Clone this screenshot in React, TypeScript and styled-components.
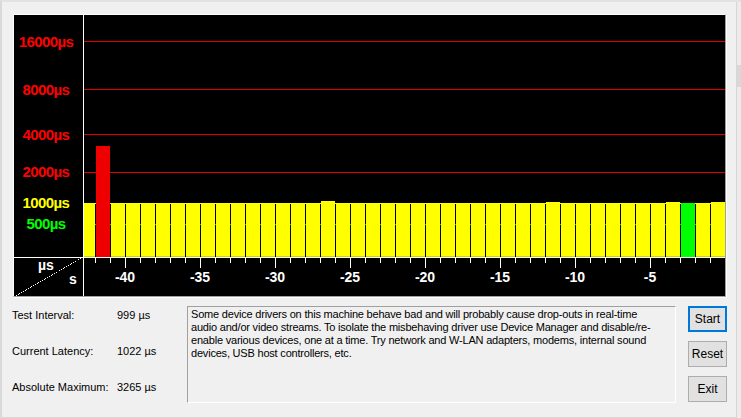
import styled, { createGlobalStyle } from "styled-components";

const GlobalStyle = createGlobalStyle`
  html, body {
    margin: 0;
    padding: 0;
    background: #f0f0f0;
  }
  body {
    font-family: "Liberation Sans", Arial, sans-serif;
    font-size: 11px;
    color: #000;
  }
  * {
    box-sizing: border-box;
  }
`;

const RIGHT = 725;
const SLOT = 15;
const BASE_TOP = 203;
const AXIS_Y = 257;
const AXIS_X = 83;

// bars that differ from the normal 1000µs level, keyed by slot index (k from right)
const SPECIAL: Record<number, { top: number; color?: string }> = {
  42: { top: 146, color: "#ee0000" },
  27: { top: 201 },
  12: { top: 202 },
  4: { top: 202 },
  3: { top: 203, color: "#00ff00" },
  1: { top: 202 },
};

const GRID = [
  { y: 41, label: "16000µs", base: 47, color: "#ff0000", line: "#e00000" },
  { y: 89, label: "8000µs", base: 95, color: "#ff0000", line: "#e00000" },
  { y: 134, label: "4000µs", base: 140, color: "#ff0000", line: "#e00000" },
  { y: 172, label: "2000µs", base: 177, color: "#ff0000", line: "#e00000" },
  { y: 203, label: "1000µs", base: 208, color: "#ffff00", line: "#ffff00" },
  { y: 224, label: "500µs", base: 229, color: "#00ff00", line: "#00e000" },
];

const STATS = [
  { label: "Test Interval:", value: "999 µs" },
  { label: "Current Latency:", value: "1022 µs" },
  { label: "Absolute Maximum:", value: "3265 µs" },
];

export default function App() {
  const slots = Array.from({ length: 42 }, (_, i) => 42 - i);

  return (
    <>
      <GlobalStyle />
      <Window>
        <Main>
          <PlotFrame>
            <Chart viewBox="14 15 711 281" width={711} height={281}>
              <rect x={14} y={15} width={711} height={281} fill="#000" />
              {GRID.map((g) => (
                <rect key={g.label} x={AXIS_X} y={g.y} width={RIGHT - AXIS_X} height={1} fill={g.line} />
              ))}
              <rect x={84} y={BASE_TOP} width={11} height={AXIS_Y - BASE_TOP} fill="#ffff00" />
              <rect x={84} y={AXIS_Y - 1} width={11} height={1} fill="#d0d000" />
              {slots.map((k) => {
                const left = RIGHT - SLOT * k + 1;
                const s = SPECIAL[k];
                const top = s ? s.top : BASE_TOP;
                const color = s?.color ?? "#ffff00";
                return (
                  <g key={k}>
                    <rect x={left} y={top} width={14} height={AXIS_Y - top} fill={color} />
                    {color === "#ffff00" && (
                      <rect x={left} y={AXIS_Y - 1} width={14} height={1} fill="#d0d000" />
                    )}
                  </g>
                );
              })}
              <rect x={AXIS_X} y={15} width={1} height={281} fill="#fff" />
              <rect x={14} y={AXIS_Y} width={711} height={1} fill="#fff" />
              {slots.map((k) => {
                const x = RIGHT - SLOT * k;
                const long = k % 5 === 0;
                return <rect key={`t${k}`} x={x} y={AXIS_Y + 1} width={1} height={long ? 10 : 5} fill="#fff" />;
              })}
              {GRID.map((g) => (
                <AxisLabel key={`l${g.label}`} x={46} y={g.base} fill={g.color}>
                  {g.label}
                </AxisLabel>
              ))}
              {[40, 35, 30, 25, 20, 15, 10, 5].map((n) => (
                <TimeLabel key={n} x={RIGHT - SLOT * n} y={282}>
                  -{n}
                </TimeLabel>
              ))}
              <line x1={16} y1={296} x2={82} y2={258} stroke="#fff" strokeWidth={1} strokeDasharray="1 1" />
              <CornerLabel x={38} y={270}>µs</CornerLabel>
              <CornerLabel x={69} y={284}>s</CornerLabel>
            </Chart>
          </PlotFrame>

          <LowerRow>
            <Stats>
              {STATS.map((s) => (
                <StatRow key={s.label}>
                  <span>{s.label}</span>
                  <span>{s.value}</span>
                </StatRow>
              ))}
            </Stats>
            <MessageBox>
              Some device drivers on this machine behave bad and will probably cause drop-outs in real-time
              <br />
              audio and/or video streams. To isolate the misbehaving driver use Device Manager and disable/re-
              <br />
              enable various devices, one at a time. Try network and W-LAN adapters, modems, internal sound
              <br />
              devices, USB host controllers, etc.
            </MessageBox>
            <Buttons>
              <Button $focused>Start</Button>
              <Button>Reset</Button>
              <Button>Exit</Button>
            </Buttons>
          </LowerRow>

          <StatusBar>
            <StatusPane $width={565} />
            <StatusPane $width={152} />
            <StatusPane />
          </StatusBar>
        </Main>
        <RightEdge>
          <EdgeMark />
        </RightEdge>
      </Window>
    </>
  );
}

const Window = styled.div`
  width: 741px;
  height: 418px;
  display: flex;
  background: #f0f0f0;
  border-left: 2px solid #d9d9d9;
  border-top: 2px solid #e2e2e2;
  overflow: hidden;
`;

const Main = styled.div`
  width: 734px;
  display: flex;
  flex-direction: column;
`;

const RightEdge = styled.div`
  flex: 1;
  border-left: 1px solid #d6d6d6;
  background: #ececec;
`;

const EdgeMark = styled.div`
  margin-top: 63px;
  height: 22px;
  background: #d8d8d8;
`;

const PlotFrame = styled.div`
  margin: 12px 0 0 11px;
  width: 713px;
  height: 283px;
  border: 1px solid;
  border-color: #ffffff #a0a0a0 #a0a0a0 #ffffff;
  box-shadow: 1px 1px 0 #ffffff;
`;

const Chart = styled.svg`
  display: block;
  shape-rendering: crispEdges;
`;

const AxisLabel = styled.text`
  font-family: "Liberation Sans", Arial, sans-serif;
  font-weight: bold;
  font-size: 15px;
  letter-spacing: -0.6px;
  text-anchor: middle;
`;

const TimeLabel = styled.text`
  font-family: "Liberation Sans", Arial, sans-serif;
  font-weight: bold;
  font-size: 14px;
  fill: #fff;
  text-anchor: middle;
`;

const CornerLabel = styled.text`
  font-family: "Liberation Sans", Arial, sans-serif;
  font-weight: bold;
  font-size: 14px;
  fill: #fff;
`;

const LowerRow = styled.div`
  display: flex;
  align-items: flex-start;
  margin-top: 9px;
`;

const Stats = styled.div`
  width: 185px;
  padding: 3px 0 0 10px;
  display: flex;
  flex-direction: column;
`;

const StatRow = styled.div`
  display: grid;
  grid-template-columns: 105px auto;
  height: 36px;
  line-height: 13px;
  white-space: nowrap;
`;

const MessageBox = styled.div`
  width: 489px;
  height: 97px;
  border: 1px solid;
  border-color: #a0a0a0 #ffffff #ffffff #a0a0a0;
  padding: 1px 3px;
  line-height: 13px;
  letter-spacing: -0.2px;
  white-space: nowrap;
  overflow: hidden;
`;

const Buttons = styled.div`
  margin-left: 12px;
  display: flex;
  flex-direction: column;
  gap: 9px;
`;

const Button = styled.button<{ $focused?: boolean }>`
  width: 39px;
  height: 26px;
  padding: 0;
  font-family: "Liberation Sans", Arial, sans-serif;
  font-size: 12px;
  color: #000;
  background: #e1e1e1;
  border: ${(p) => (p.$focused ? "2px solid #0078d7" : "1px solid #adadad")};
  outline: none;
`;

const StatusBar = styled.div`
  margin-top: auto;
  height: 5px;
  display: flex;
  border-top: 1px solid #d7d7d7;
`;

const StatusPane = styled.div<{ $width?: number }>`
  width: ${(p) => (p.$width ? `${p.$width}px` : "auto")};
  flex: ${(p) => (p.$width ? "none" : "1")};
  border-right: 1px solid #d7d7d7;
`;
